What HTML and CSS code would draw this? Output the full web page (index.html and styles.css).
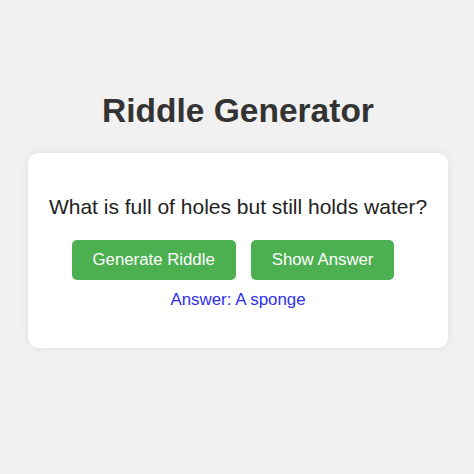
FILE: index.html
```html
<!DOCTYPE html>
<html>
<head>
<meta charset="utf-8">
<link rel="stylesheet" href="styles.css">
</head>
<body>
<main class="page">
  <h1 class="title">Riddle Generator</h1>
  <section class="card">
    <p class="riddle">What is full of holes but still holds water?</p>
    <div class="actions">
      <button class="btn">Generate Riddle</button>
      <button class="btn">Show Answer</button>
    </div>
    <p class="answer">Answer: A sponge</p>
  </section>
</main>
</body>
</html>
```
FILE: styles.css
```css
html, body {
  margin: 0;
  padding: 0;
}
body {
  background: #f1f1f1;
  font-family: "Liberation Sans", Arial, sans-serif;
  width: 474px;
  height: 474px;
}
.page {
  display: flex;
  flex-direction: column;
  align-items: center;
  padding-top: 91px;
  padding-left: 2px;
}
.title {
  margin: 0;
  font-size: 33.5px;
  line-height: 40px;
  font-weight: bold;
  color: #333;
}
.card {
  margin-top: 22px;
  width: 420px;
  box-sizing: border-box;
  background: #fff;
  border-radius: 10px;
  box-shadow: 0 0 8px rgba(0,0,0,0.08);
  display: flex;
  flex-direction: column;
  align-items: center;
  padding: 42px 0 38px;
}
.riddle {
  margin: 0;
  font-size: 21px;
  line-height: 24px;
  color: #222;
}
.actions {
  display: flex;
  gap: 15px;
  margin-top: 21px;
  padding-right: 10px;
}
.btn {
  height: 40px;
  padding: 0 21px;
  border: none;
  border-radius: 5px;
  background: #4caf50;
  color: #fff;
  font-family: "Liberation Sans", Arial, sans-serif;
  font-size: 16.8px;
}
.answer {
  margin: 10px 0 0;
  font-size: 16.9px;
  line-height: 20px;
  color: #2f2ff0;
}
```
